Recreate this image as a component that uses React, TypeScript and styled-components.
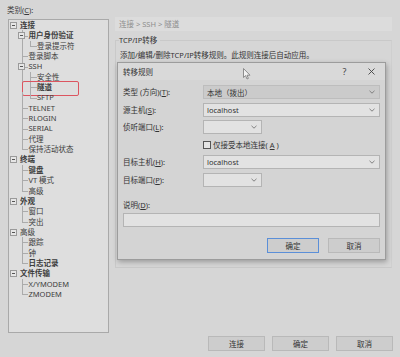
import React from "react";
import styled, { createGlobalStyle } from "styled-components";

const GlobalStyle = createGlobalStyle`
  html, body { margin: 0; padding: 0; background: #d6d6d6; }
  * { box-sizing: border-box; }
  #root { width: 400px; height: 357px; }
`;

const FONT = `"Noto Sans", "Noto Sans CJK SC", sans-serif`;

type TreeNode = { label: string; bold?: boolean; marked?: boolean; children?: TreeNode[] };

const tree: TreeNode[] = [
  {
    label: "连接", bold: true, children: [
      { label: "用户身份验证", bold: true, children: [{ label: "登录提示符" }] },
      { label: "登录脚本" },
      {
        label: "SSH", children: [
          { label: "安全性" },
          { label: "隧道", bold: true, marked: true },
          { label: "SFTP" },
        ],
      },
      { label: "TELNET" },
      { label: "RLOGIN" },
      { label: "SERIAL" },
      { label: "代理" },
      { label: "保持活动状态" },
    ],
  },
  { label: "终端", bold: true, children: [{ label: "键盘", bold: true }, { label: "VT 模式" }, { label: "高级" }] },
  { label: "外观", bold: true, children: [{ label: "窗口" }, { label: "突出" }] },
  { label: "高级", children: [{ label: "跟踪" }, { label: "钟" }, { label: "日志记录", bold: true }] },
  { label: "文件传输", bold: true, children: [{ label: "X/YMODEM" }, { label: "ZMODEM" }] },
];

type FlatRow = { node: TreeNode; level: number; guides: boolean[]; last: boolean };

function flatten(nodes: TreeNode[], level: number, guides: boolean[]): FlatRow[] {
  const out: FlatRow[] = [];
  nodes.forEach((node, i) => {
    const last = i === nodes.length - 1;
    out.push({ node, level, guides, last });
    if (node.children) {
      out.push(...flatten(node.children, level + 1, [...guides, level > 0 && !last]));
    }
  });
  return out;
}

const Page = styled.div`
  position: relative;
  width: 400px;
  height: 357px;
  background: #d6d6d6;
  font-family: ${FONT};
  font-size: 7.5px;
  color: #333;
  display: flex;
  flex-direction: column;
  overflow: hidden;
`;

const Main = styled.div`
  display: grid;
  grid-template-columns: 101px 1fr;
  column-gap: 6px;
  padding: 4px 8px 0 8px;
`;

const LeftCol = styled.div`
  display: flex;
  flex-direction: column;
`;

const FieldCaption = styled.div`
  height: 15px;
  line-height: 12px;
  padding-left: 0;
  margin-left: -1px;
  color: #3a3a3a;
`;

const TreeBox = styled.div`
  height: 314px;
  background: #dedede;
  border: 1px solid #a9a9a9;
  padding-top: 0;
`;

const Row = styled.div<{ $marked?: boolean }>`
  position: relative;
  display: flex;
  align-items: stretch;
  height: 10.35px;
  ${(p) =>
    p.$marked &&
    `&::after {
      content: "";
      position: absolute;
      left: 13px;
      top: -1.5px;
      width: 55px;
      height: 13px;
      border: 1.5px solid #dc5560;
      border-radius: 2px;
    }`}
`;

const Guide = styled.div<{ $line: boolean }>`
  position: relative;
  width: 8.5px;
  flex: none;
  &::before {
    content: "";
    display: ${(p) => (p.$line ? "block" : "none")};
    position: absolute;
    left: 4px;
    top: 0;
    bottom: 0;
    border-left: 1px solid #ababab;
  }
`;

const Connector = styled.div<{ $lines: boolean; $down: boolean }>`
  position: relative;
  width: 8.5px;
  flex: none;
  display: flex;
  align-items: center;
  justify-content: center;
  &::before {
    content: "";
    display: ${(p) => (p.$lines ? "block" : "none")};
    position: absolute;
    left: 4px;
    top: 0;
    bottom: ${(p) => (p.$down ? "0" : "50%")};
    border-left: 1px solid #ababab;
  }
  &::after {
    content: "";
    display: ${(p) => (p.$lines ? "block" : "none")};
    position: absolute;
    left: 4px;
    right: -2px;
    top: 50%;
    border-top: 1px solid #ababab;
  }
`;

const Expander = styled.div`
  position: relative;
  z-index: 1;
  width: 7px;
  height: 7px;
  border: 1px solid #9a9a9a;
  background: #e6e6e6;
  display: flex;
  align-items: center;
  justify-content: center;
  &::before {
    content: "";
    width: 3px;
    border-top: 1px solid #555;
  }
`;

const NodeLabel = styled.span<{ $bold?: boolean }>`
  margin-left: 2.5px;
  line-height: 10.35px;
  white-space: nowrap;
  color: #3c3c3c;
  font-weight: ${(p) => (p.$bold ? 700 : 400)};
`;

const RightCol = styled.div`
  display: flex;
  flex-direction: column;
  padding-top: 13px;
`;

const Breadcrumb = styled.div`
  height: 14px;
  line-height: 14px;
  background: #dcdcdc;
  padding-left: 4px;
  color: #8e8e8e;
`;

const Group = styled.fieldset`
  margin: 4px 0 0 0;
  padding: 2px 4px 0 4px;
  height: 233px;
  border: 1px solid #c9c9c9;
  border-right-color: #cfcfcf;
  min-width: 0;
`;

const Legend = styled.legend`
  padding: 0 3px 0 0;
  margin-left: -1px;
  line-height: 10px;
  color: #333;
`;

const Description = styled.div`
  line-height: 10px;
  margin-top: 3px;
  color: #333;
`;

const Footer = styled.div`
  display: flex;
  justify-content: flex-end;
  gap: 7px;
  padding-right: 7px;
  margin-top: 3px;
`;

const PushButton = styled.button<{ $w: number; $focus?: boolean }>`
  width: ${(p) => p.$w}px;
  height: 15px;
  padding: 0;
  font-family: ${FONT};
  font-size: 7.5px;
  color: #333;
  background: #cdcdcd;
  border: 1px solid ${(p) => (p.$focus ? "#5b8fd8" : "#b9b9b9")};
  border-radius: 0;
`;

const Dialog = styled.div`
  position: absolute;
  left: 117px;
  top: 62px;
  width: 269px;
  height: 198px;
  background: #d4d4d4;
  border: 1px solid #9c9c9c;
  box-shadow: 1px 2px 5px rgba(0, 0, 0, 0.28);
  display: flex;
  flex-direction: column;
`;

const TitleBar = styled.div`
  height: 17px;
  flex: none;
  display: flex;
  align-items: center;
  background: #d9d9d9;
  padding-left: 5px;
`;

const TitleText = styled.div`
  flex: 1;
  color: #333;
`;

const TitleButton = styled.div`
  width: 27px;
  height: 17px;
  display: flex;
  align-items: center;
  justify-content: center;
  color: #444;
  font-size: 9px;
`;

const DialogBody = styled.div`
  padding: 5px 5px 0 5px;
  display: flex;
  flex-direction: column;
`;

const FormGrid = styled.div`
  display: grid;
  grid-template-columns: 80px 1fr;
  grid-auto-rows: 14px;
  row-gap: 3.5px;
  align-items: center;
`;

const FormLabel = styled.div`
  line-height: 10px;
  color: #333;
  white-space: nowrap;
`;

const Combo = styled.div<{ $w?: number; $list?: boolean }>`
  width: ${(p) => (p.$w ? `${p.$w}px` : "100%")};
  height: 14px;
  display: flex;
  align-items: center;
  padding: 0 4px 0 3px;
  background: ${(p) => (p.$list ? "#cbcbcb" : "#e2e2e2")};
  border: 1px solid ${(p) => (p.$list ? "#bdbdbd" : "#b4b4b4")};
  color: #333;
`;

const ComboValue = styled.span`
  flex: 1;
  white-space: nowrap;
`;

const CheckRow = styled.label`
  display: flex;
  align-items: center;
  gap: 2px;
  color: #333;
`;

const CheckBox = styled.span`
  width: 8px;
  height: 8px;
  border: 1px solid #555;
  background: #e4e4e4;
`;

const NoteLabel = styled(FormLabel)`
  margin-top: 13px;
`;

const TextArea = styled.div`
  margin-top: 3.5px;
  height: 14px;
  background: #e2e2e2;
  border: 1px solid #b4b4b4;
`;

const DialogButtons = styled.div`
  display: flex;
  justify-content: flex-end;
  gap: 9px;
  margin-top: 11px;
`;

const Cursor = styled.svg`
  position: absolute;
  left: 243px;
  top: 68px;
`;

const Chevron = () => (
  <svg width="6" height="4" viewBox="0 0 6 4">
    <path d="M0.5 0.8 L3 3.2 L5.5 0.8" fill="none" stroke="#777" strokeWidth="0.9" />
  </svg>
);

function ComboBox({ value, width, list }: { value?: string; width?: number; list?: boolean }) {
  return (
    <Combo $w={width} $list={list}>
      <ComboValue>{value}</ComboValue>
      <Chevron />
    </Combo>
  );
}

export default function App() {
  const rows = flatten(tree, 0, []);
  return (
    <Page>
      <GlobalStyle />
      <Main>
        <LeftCol>
          <FieldCaption>类别(<u>C</u>):</FieldCaption>
          <TreeBox>
            {rows.map((r, i) => (
              <Row key={i} $marked={r.node.marked}>
                {r.guides.map((g, d) => (
                  <Guide key={d} $line={g} />
                ))}
                <Connector $lines={r.level > 0} $down={!r.last}>
                  {r.node.children && <Expander />}
                </Connector>
                <NodeLabel $bold={r.node.bold}>{r.node.label}</NodeLabel>
              </Row>
            ))}
          </TreeBox>
        </LeftCol>
        <RightCol>
          <Breadcrumb>连接 &gt; SSH &gt; 隧道</Breadcrumb>
          <Group>
            <Legend>TCP/IP转移</Legend>
            <Description>添加/编辑/删除TCP/IP转移规则。此规则连接后自动应用。</Description>
          </Group>
        </RightCol>
      </Main>
      <Footer>
        <PushButton $w={57}>连接</PushButton>
        <PushButton $w={57}>确定</PushButton>
        <PushButton $w={57}>取消</PushButton>
      </Footer>

      <Dialog>
        <TitleBar>
          <TitleText>转移规则</TitleText>
          <TitleButton>?</TitleButton>
          <TitleButton>
            <svg width="7" height="7" viewBox="0 0 7 7">
              <path d="M0.5 0.5 L6.5 6.5 M6.5 0.5 L0.5 6.5" stroke="#444" strokeWidth="0.9" />
            </svg>
          </TitleButton>
        </TitleBar>
        <DialogBody>
          <FormGrid>
            <FormLabel>类型 (方向)(<u>T</u>):</FormLabel>
            <ComboBox value="本地（拨出）" list />
            <FormLabel>源主机(<u>S</u>):</FormLabel>
            <ComboBox value="localhost" />
            <FormLabel>侦听端口(<u>L</u>):</FormLabel>
            <ComboBox width={59} />
            <span />
            <CheckRow>
              <CheckBox />
              仅接受本地连接(<u>A</u>)
            </CheckRow>
            <FormLabel>目标主机(<u>H</u>):</FormLabel>
            <ComboBox value="localhost" />
            <FormLabel>目标端口(<u>P</u>):</FormLabel>
            <ComboBox width={59} />
          </FormGrid>
          <NoteLabel>说明(<u>D</u>):</NoteLabel>
          <TextArea />
          <DialogButtons>
            <PushButton $w={52} $focus>确定</PushButton>
            <PushButton $w={52}>取消</PushButton>
          </DialogButtons>
        </DialogBody>
      </Dialog>

      <Cursor width="8" height="12" viewBox="0 0 8 12">
        <path d="M0.5 0.5 L0.5 9.5 L2.6 7.6 L4 11 L5.4 10.4 L4 7.2 L7 7.2 Z" fill="#f2f2f2" stroke="#777" strokeWidth="0.8" />
      </Cursor>
    </Page>
  );
}
